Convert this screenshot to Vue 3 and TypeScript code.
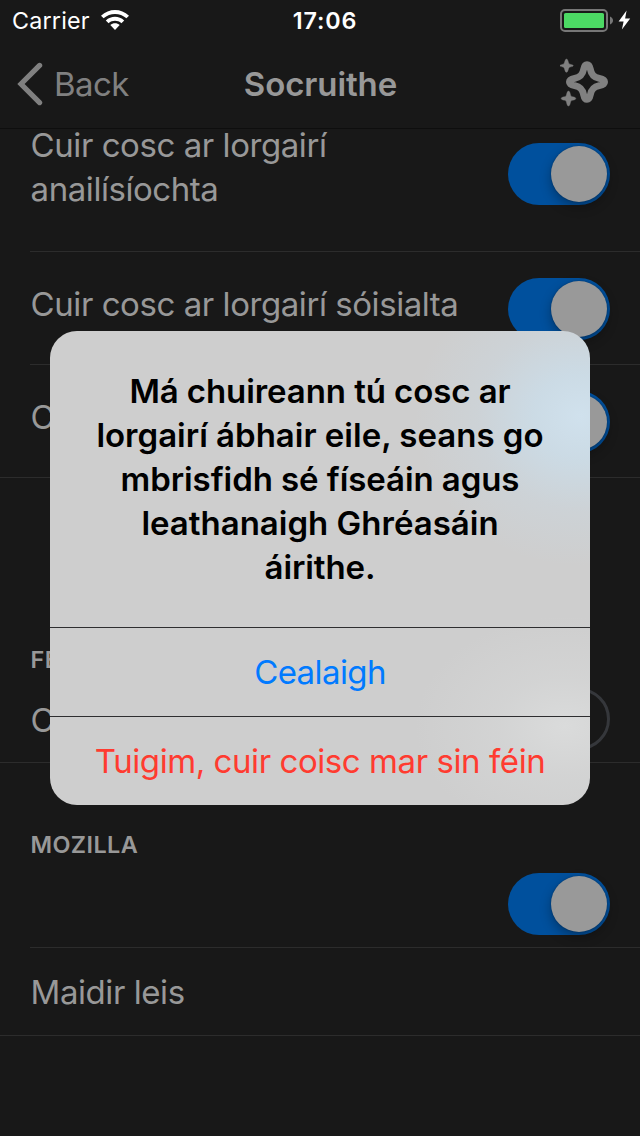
<script setup lang="ts">
interface SettingRow {
  id: string
  lines: string[]
  toggle: 'on' | 'off' | null
  inset: boolean
}

const trackers: SettingRow[] = [
  { id: 'analytics', lines: ['Cuir cosc ar lorgairí', 'anailísíochta'], toggle: 'on', inset: true },
  { id: 'social', lines: ['Cuir cosc ar lorgairí sóisialta'], toggle: 'on', inset: true },
  { id: 'content', lines: ['Cuir'], toggle: 'on', inset: false },
]
const performance: SettingRow[] = [
  { id: 'fonts', lines: ['Cuir'], toggle: 'off', inset: false },
]
const mozilla: SettingRow[] = [
  { id: 'usage', lines: [], toggle: 'on', inset: true },
  { id: 'about', lines: ['Maidir leis'], toggle: null, inset: false },
]
const sections = [
  { id: 'trackers', title: '', rows: trackers },
  { id: 'performance', title: 'FEIDHMÍOCHT', rows: performance },
  { id: 'mozilla', title: 'MOZILLA', rows: mozilla },
]

const message: string[] = [
  'Má chuireann tú cosc ar',
  'lorgairí ábhair eile, seans go',
  'mbrisfidh sé físeáin agus',
  'leathanaigh Ghréasáin',
  'áirithe.',
]
</script>

<template>
  <div class="screen">
    <header class="status">
      <div class="status-left">
        <span class="carrier">Carrier</span>
        <svg class="wifi" width="28" height="21" viewBox="0 0 28 21">
          <path d="M0 5.7C8 -1.9 20 -1.9 28 5.7L25.4 8.3C19 2.4 9 2.4 2.6 8.3Z" fill="#fff" />
          <path d="M4.8 10.4C10 5.6 18 5.6 23.2 10.4L20.4 13.2C16.7 10 11.3 10 7.6 13.2Z" fill="#fff" />
          <path d="M9.3 15C12 12.6 16 12.6 18.7 15L14 20Z" fill="#fff" />
        </svg>
      </div>
      <span class="clock">17:06</span>
      <svg class="battery" width="72" height="24" viewBox="0 0 72 24">
        <rect x="1" y="1" width="46" height="21" rx="4" fill="none" stroke="#777" stroke-width="2" />
        <rect x="4" y="4" width="40" height="15" rx="1.6" fill="#4cd964" />
        <path d="M50 7.5C54 9 54 14 50 15.5Z" fill="#777" />
        <path d="M66.6 1.6L58.6 12.6H63.6L61.9 20.6L70.2 9.6H65.1Z" fill="#fff" />
      </svg>
    </header>

    <nav class="nav">
      <div class="nav-back">
        <svg width="26" height="44" viewBox="0 0 26 44">
          <path d="M22.6 3.4L4 22L22.6 40.6" fill="none" stroke="#808080" stroke-width="5.2" stroke-linecap="round" stroke-linejoin="miter" />
        </svg>
        <span class="back-label">Back</span>
      </div>
      <h1 class="nav-title">Socruithe</h1>
      <svg class="sparkle" width="50" height="50" viewBox="0 0 50 50">
        <path d="M27 6.6C28.9 6.6 29.7 7.9 30.3 11C31.3 16.6 33.7 19.3 39.3 20.4C42.8 21.1 44.6 21.9 44.6 24C44.6 26.1 42.8 26.9 39.3 27.6C33.7 28.7 31.3 31.4 30.3 37C29.7 40.1 28.9 41.4 27 41.4C25.1 41.4 24.3 40.1 23.7 37C22.7 31.4 20.3 28.7 14.7 27.6C11.2 26.9 9.4 26.1 9.4 24C9.4 21.9 11.2 21.1 14.7 20.4C20.3 19.3 22.7 16.6 23.7 11C24.3 7.9 25.1 6.6 27 6.6Z" fill="none" stroke="#808080" stroke-width="6.8" stroke-linejoin="round" />
        <path d="M6.5 1C8.2 1 8.2 5.3 9.3 5.9C10 6.5 13.2 6.5 13.2 7.6C13.2 8.8 10 8.8 9.3 9.4C8.2 10.2 8.2 14.2 6.5 14.2C4.8 14.2 4.8 10.2 3.7 9.4C3 8.8 0 8.8 0 7.6C0 6.5 3 6.5 3.7 5.9C4.8 5.3 4.8 1 6.5 1Z" fill="#808080" stroke="#808080" stroke-width=".4" />
        <path d="M8.5 33.1C10.4 33.1 10.1 37.5 11.2 38.2C12 38.9 15.8 38.9 15.8 40.5C15.8 42.1 12 42.1 11.2 42.8C10.1 43.6 10.4 48 8.5 48C6.6 48 6.9 43.6 5.8 42.8C5 42.1 1.2 42.1 1.2 40.5C1.2 38.9 5 38.9 5.8 38.2C6.9 37.5 6.6 33.1 8.5 33.1Z" fill="#808080" stroke="#808080" stroke-width=".4" />
      </svg>
    </nav>

    <main class="list">
      <section v-for="s in sections" :key="s.id" :class="'section-' + s.id">
        <h2 v-if="s.title" class="section-title">{{ s.title }}</h2>
        <div v-for="r in s.rows" :key="r.id" class="row" :class="[r.id, { full: !r.inset }]">
          <div class="label">
            <div v-for="line in r.lines" :key="line">{{ line }}</div>
          </div>
          <span v-if="r.toggle" class="toggle" :class="r.toggle"><i class="knob"></i></span>
        </div>
      </section>
    </main>

    <div class="alert" role="alertdialog">
      <div class="message">
        <div v-for="line in message" :key="line">{{ line }}</div>
      </div>
      <button class="action cancel">Cealaigh</button>
      <button class="action confirm">Tuigim, cuir coisc mar sin féin</button>
    </div>
  </div>
</template>

<style>
body {
  margin: 0;
  background: #181818;
}
</style>

<style scoped>
.screen {
  position: relative;
  width: 640px;
  height: 1136px;
  overflow: hidden;
  background: #181818;
  color: #989898;
  font-family: Inter, "Liberation Sans", sans-serif;
  white-space: nowrap;
}
.status {
  display: grid;
  grid-template-columns: 1fr auto 1fr;
  height: 40px;
  color: #fff;
  font-size: 23.3px;
  line-height: 41px;
}
.status-left {
  display: flex;
  padding-left: 12px;
}
.carrier {
  width: 78px;
  letter-spacing: 0.2px;
}
.wifi {
  margin: 10px 0 0 11px;
}
.clock {
  padding-left: 10px;
  font-weight: 600;
  letter-spacing: 0.9px;
}
.battery {
  justify-self: end;
  margin: 9px 8px 0 0;
}
.nav {
  display: grid;
  grid-template-columns: 1fr auto 1fr;
  height: 88px;
  border-bottom: 1px solid #0e0e0e;
  line-height: 88px;
  font-size: 33px;
}
.nav-back {
  display: flex;
  padding-left: 17px;
  color: #808080;
}
.nav-back svg {
  margin-top: 22px;
}
.back-label {
  margin-left: 11px;
  letter-spacing: -0.6px;
}
.nav-title {
  margin: 0;
  padding-left: 1px;
  font-size: 33px;
  font-weight: 600;
  letter-spacing: -0.1px;
}
.sparkle {
  justify-self: end;
  margin: 18px 30px 0 0;
}
.list {
  font-size: 33px;
  line-height: 44px;
  letter-spacing: -0.44px;
}
.row {
  display: flex;
  justify-content: space-between;
  box-sizing: border-box;
  height: 113px;
  margin-left: 30px;
  padding-right: 30px;
  border-bottom: 1px solid #2c2c2c;
}
.row.full {
  margin-left: 0;
  padding-left: 30px;
}
.label {
  padding: 30px 0 0 0.6px;
}
.toggle {
  flex: none;
  box-sizing: border-box;
  width: 102px;
  height: 62px;
  margin-top: 26px;
  padding: 3px;
  border-radius: 31px;
  background: #00509d;
}
.knob {
  display: block;
  width: 56px;
  height: 56px;
  margin-left: 40px;
  border-radius: 50%;
  background: #999;
  box-shadow: 0 5px 12px rgba(0, 0, 0, 0.3), 0 0 2px rgba(0, 0, 0, 0.3);
}
.toggle.off {
  border: 3px solid #35373b;
  background: transparent;
}
.toggle.off .knob {
  display: none;
}
.row.analytics {
  height: 123px;
}
.analytics .label {
  margin-top: -6px;
  padding-top: 0;
}
.analytics .toggle {
  margin-top: 14px;
}
.section-title {
  box-sizing: border-box;
  height: 99px;
  margin: 0;
  padding: 60px 0 0 30.5px;
  font-size: 23.4px;
  font-weight: 600;
  line-height: 44px;
  letter-spacing: 0.4px;
}
.section-performance .section-title {
  height: 197px;
  padding-top: 160px;
}
.row.fonts {
  height: 88px;
}
.fonts .label {
  padding-top: 23px;
}
.fonts .toggle {
  margin-top: 13px;
}
.row.usage {
  height: 86px;
}
.usage .toggle {
  margin-top: 11px;
}
.row.about {
  height: 88px;
}
.about .label {
  padding-top: 22px;
}
.alert {
  position: absolute;
  top: 331px;
  left: 50px;
  width: 540px;
  height: 474px;
  overflow: hidden;
  border-radius: 27px;
  background:
    radial-gradient(ellipse 165px 150px at 530px 85px, rgba(208, 225, 237, 1) 0%, rgba(203, 221, 233, 0.85) 28%, rgba(203, 217, 227, 0.4) 62%, rgba(206, 206, 206, 0) 100%),
    radial-gradient(ellipse 150px 110px at 515px 395px, #dadbdb 0%, rgba(214, 215, 215, 0.6) 45%, rgba(206, 206, 206, 0) 100%),
    #cecece;
}
.message {
  box-sizing: border-box;
  height: 296px;
  padding-top: 38px;
  color: #000;
  font-size: 33px;
  font-weight: 600;
  line-height: 44px;
  text-align: center;
}
.message div:nth-child(odd) {
  letter-spacing: -0.08px;
}
.action {
  display: block;
  box-sizing: border-box;
  width: 100%;
  height: 89px;
  padding: 0;
  border: 0;
  border-top: 1px solid #2e2e30;
  background: none;
  font: 400 33px/88px Inter, "Liberation Sans", sans-serif;
  letter-spacing: -0.43px;
  text-align: center;
}
.cancel {
  color: #007aff;
  letter-spacing: -0.6px;
}
.confirm {
  color: #ff3b30;
}
</style>
